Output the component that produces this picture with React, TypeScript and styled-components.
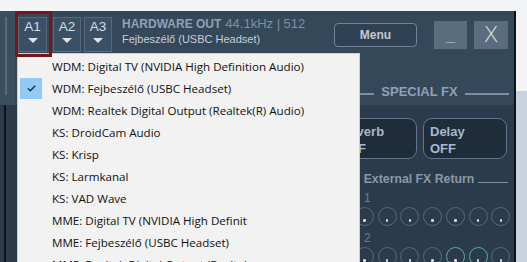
import React from "react";
import styled, { createGlobalStyle } from "styled-components";

const GlobalStyle = createGlobalStyle`
  html, body {
    margin: 0;
    padding: 0;
    background: #f3f4f6;
    overflow: hidden;
  }
  #root {
    width: 527px;
    height: 262px;
  }
`;

const Page = styled.div`
  display: flex;
  flex-direction: column;
  width: 527px;
  height: 262px;
  background: #f3f4f6;
  font-family: "Liberation Sans", Arial, sans-serif;
`;
const TopGap = styled.div`
  height: 11px;
  flex-shrink: 0;
`;
const Workspace = styled.div`
  display: flex;
  flex: 1;
  min-height: 0;
`;
const Panel = styled.div`
  position: relative;
  width: 514px;
  border-right: 2px solid #0c1218;
  display: flex;
  flex-direction: column;
  overflow: hidden;
`;
const SideStrip = styled.div`
  flex: 1;
  display: flex;
  flex-direction: column;
`;
const SideTop = styled.div`
  height: 80px;
  background: #f4f4f4;
`;
const SideBottom = styled.div`
  flex: 1;
  background: #c9d2df;
`;

/* ---------- header ---------- */
const Top = styled.div`
  display: flex;
  height: 94px;
  flex-shrink: 0;
  background: #34485a;
`;
const RailTop = styled.div`
  width: 15px;
  flex-shrink: 0;
  background: #3a4e60;
  &::before {
    content: "";
    display: block;
    width: 2px;
    height: 78px;
    margin: 6px 0 0 5px;
    background: #586b7d;
  }
`;
const TopContent = styled.div`
  flex: 1;
  display: flex;
  flex-direction: column;
`;
const Toolbar = styled.div`
  display: flex;
  align-items: flex-start;
  height: 42px;
  flex-shrink: 0;
  padding-right: 6px;
`;
const FocusFrame = styled.div`
  position: relative;
  z-index: 3;
  width: 31px;
  height: 37px;
  padding-top: 3px;
  margin-right: 1px;
  border: 3px solid #7a1517;
  flex-shrink: 0;
`;
const ChannelGroup = styled.div`
  display: flex;
  gap: 3px;
  margin-top: 6px;
`;
const ChannelButton = styled.div<{ $w?: number }>`
  width: ${(p) => p.$w ?? 28}px;
  height: 35px;
  box-sizing: border-box;
  border: 1px solid #56697b;
  background: #3a5065;
  display: flex;
  flex-direction: column;
  align-items: center;
`;
const ChannelLabel = styled.span`
  margin-top: 2px;
  font-size: 13.5px;
  line-height: 14px;
  color: #d5dce3;
`;
const DownArrow = styled.span`
  margin-top: 4px;
  width: 0;
  height: 0;
  border-left: 5px solid transparent;
  border-right: 5px solid transparent;
  border-top: 5px solid #dde3e9;
`;
const DeviceInfo = styled.div`
  margin: 4px 0 0 10px;
  display: flex;
  flex-direction: column;
  white-space: nowrap;
`;
const DeviceTitle = styled.div`
  line-height: 15px;
`;
const TitleStrong = styled.span`
  font-size: 12px;
  font-weight: bold;
  color: #8ea3b8;
`;
const TitleRate = styled.span`
  font-size: 13px;
  color: #7d91a3;
  margin-left: 4px;
`;
const DeviceName = styled.div`
  margin-top: 1px;
  font-size: 11px;
  line-height: 13px;
  color: #c5ced8;
`;
const Spacer = styled.div`
  flex: 1;
`;
const MenuButton = styled.div`
  width: 83px;
  height: 24px;
  margin-top: 12px;
  box-sizing: border-box;
  border: 1px solid #6e8498;
  border-radius: 4px;
  background: #2f4152;
  display: flex;
  align-items: center;
  justify-content: center;
  font-size: 12px;
  font-weight: bold;
  color: #bfc9d3;
`;
const WindowButton = styled.div<{ $w: number; $ml: number }>`
  width: ${(p) => p.$w}px;
  height: 28px;
  margin: 10px 0 0 ${(p) => p.$ml}px;
  background: #5a6d7e;
  display: flex;
  align-items: center;
  justify-content: center;
  color: #dde4ea;
`;
const MinGlyph = styled.span`
  font-size: 16px;
  font-weight: bold;
  line-height: 16px;
  margin-top: 2px;
  color: #c8d2da;
`;
const CloseGlyph = styled.span`
  font-family: "DejaVu Sans", sans-serif;
  font-size: 22px;
  font-weight: 200;
  line-height: 24px;
  color: #d9e0e7;
`;
const LabelRow = styled.div`
  flex: 1;
  display: flex;
  justify-content: flex-end;
  align-items: flex-end;
  padding: 0 5px 6px 0;
`;

const SectionTitle = styled.div<{ $size: number; $line: number; $color: string }>`
  display: flex;
  align-items: flex-end;
  gap: 4px;
  font-size: ${(p) => p.$size}px;
  line-height: 15px;
  font-weight: bold;
  color: ${(p) => p.$color};
  white-space: nowrap;
  &::before,
  &::after {
    content: "";
    flex: 1;
    height: ${(p) => p.$line}px;
    margin-bottom: 4px;
    background: #7890a4;
  }
`;
const FxTitle = styled(SectionTitle)`
  width: 179px;
  gap: 7px;
`;

/* ---------- body ---------- */
const Body = styled.div`
  flex: 1;
  display: flex;
  background: #2b3b4b;
  min-height: 0;
`;
const RailBottom = styled.div`
  width: 15px;
  flex-shrink: 0;
  &::before {
    content: "";
    display: block;
    width: 2px;
    height: 100%;
    margin-left: 4px;
    background: #0d141b;
  }
`;
const BodyContent = styled.div`
  flex: 1;
  display: flex;
  justify-content: flex-end;
  padding-right: 4px;
`;
const FxColumn = styled.div`
  width: 180px;
  display: flex;
  flex-direction: column;
`;
const FxButtons = styled.div`
  display: grid;
  grid-template-columns: 84px 84px;
  gap: 6px;
  margin: 13px 0 0 3px;
`;
const FxButton = styled.div`
  height: 41px;
  box-sizing: border-box;
  border: 1px solid #5f768b;
  border-radius: 9px;
  background: #1f2d3a;
  padding: 4px 0 0 6px;
  font-size: 13px;
  line-height: 17px;
  font-weight: bold;
  color: #a8b8c8;
`;
const ReturnTitle = styled(SectionTitle)`
  margin-top: 13px;
  padding-right: 2px;
`;
const RowLabel = styled.div<{ $mt: number }>`
  margin-top: ${(p) => p.$mt}px;
  padding-left: 34px;
  font-size: 12px;
  line-height: 14px;
  color: #6c8092;
`;
const KnobRow = styled.div`
  display: flex;
  gap: 3.75px;
  padding-left: 2px;
  margin-top: 2px;
`;
const Knob = styled.div<{ $active?: boolean }>`
  width: 19px;
  height: 19px;
  flex-shrink: 0;
  box-sizing: border-box;
  border-radius: 50%;
  border: 1.5px solid ${(p) => (p.$active ? "#5caf93" : "#55697c")};
  display: flex;
  justify-content: center;
  align-items: flex-end;
  padding-bottom: 3.5px;
`;
const KnobDot = styled.span`
  width: 2.5px;
  height: 2.5px;
  border-radius: 50%;
  background: #d3dbe3;
`;

/* ---------- dropdown ---------- */
const Dropdown = styled.div`
  position: absolute;
  z-index: 2;
  left: 17px;
  top: 42px;
  width: 343px;
  box-sizing: border-box;
  padding: 1px 0;
  background: #f2f2f2;
  border: 1px solid #cfcfcf;
  font-family: "Open Sans", "Noto Sans", sans-serif;
`;
const MenuItem = styled.div`
  display: flex;
  align-items: center;
  height: 22px;
`;
const CheckBox = styled.div<{ $on?: boolean }>`
  width: 22px;
  height: 21px;
  margin-left: 2px;
  background: ${(p) => (p.$on ? "#91c9f7" : "transparent")};
  display: flex;
  align-items: center;
  justify-content: center;
`;
const ItemText = styled.span`
  margin-left: 10px;
  font-size: 11.6px;
  color: #111;
  white-space: nowrap;
`;

const devices = [
  "WDM: Digital TV (NVIDIA High Definition Audio)",
  "WDM: Fejbeszélő (USBC Headset)",
  "WDM: Realtek Digital Output (Realtek(R) Audio)",
  "KS: DroidCam Audio",
  "KS: Krisp",
  "KS: Larmkanal",
  "KS: VAD Wave",
  "MME: Digital TV (NVIDIA High Definit",
  "MME: Fejbeszélő (USBC Headset)",
  "MME: Realtek Digital Output (Realtek",
];

const KnobLine = ({ active = [] as number[] }) => (
  <KnobRow>
    {Array.from({ length: 8 }).map((_, i) => (
      <Knob key={i} $active={active.includes(i)}>
        <KnobDot />
      </Knob>
    ))}
  </KnobRow>
);

const App: React.FC = () => {
  return (
    <Page>
      <GlobalStyle />
      <TopGap />
      <Workspace>
        <Panel>
          <Top>
            <RailTop />
            <TopContent>
              <Toolbar>
                <FocusFrame>
                  <ChannelButton $w={29}>
                    <ChannelLabel>A1</ChannelLabel>
                    <DownArrow />
                  </ChannelButton>
                </FocusFrame>
                <ChannelGroup>
                  <ChannelButton>
                    <ChannelLabel>A2</ChannelLabel>
                    <DownArrow />
                  </ChannelButton>
                  <ChannelButton>
                    <ChannelLabel>A3</ChannelLabel>
                    <DownArrow />
                  </ChannelButton>
                </ChannelGroup>
                <DeviceInfo>
                  <DeviceTitle>
                    <TitleStrong>HARDWARE OUT</TitleStrong>
                    <TitleRate>44.1kHz | 512</TitleRate>
                  </DeviceTitle>
                  <DeviceName>Fejbeszélő (USBC Headset)</DeviceName>
                </DeviceInfo>
                <Spacer />
                <MenuButton>Menu</MenuButton>
                <WindowButton $w={33} $ml={17}>
                  <MinGlyph>_</MinGlyph>
                </WindowButton>
                <WindowButton $w={34} $ml={7}>
                  <CloseGlyph>X</CloseGlyph>
                </WindowButton>
              </Toolbar>
              <LabelRow>
                <FxTitle $size={13} $line={2} $color="#8ea2b6">
                  SPECIAL FX
                </FxTitle>
              </LabelRow>
            </TopContent>
          </Top>
          <Body>
            <RailBottom />
            <BodyContent>
              <FxColumn>
                <FxButtons>
                  <FxButton>
                    Reverb
                    <br />
                    OFF
                  </FxButton>
                  <FxButton>
                    Delay
                    <br />
                    OFF
                  </FxButton>
                </FxButtons>
                <ReturnTitle $size={12.3} $line={1.5} $color="#8799ab">
                  External FX Return
                </ReturnTitle>
                <RowLabel $mt={4}>1</RowLabel>
                <KnobLine />
                <RowLabel $mt={5}>2</RowLabel>
                <KnobLine active={[5, 6]} />
              </FxColumn>
            </BodyContent>
          </Body>
          <Dropdown>
            {devices.map((d, i) => (
              <MenuItem key={d}>
                <CheckBox $on={i === 1}>
                  {i === 1 && (
                    <svg width="9" height="7" viewBox="0 0 9 7">
                      <path d="M0.8 3.4 L3.3 5.8 L8.2 0.8" fill="none" stroke="#1d2833" strokeWidth="1.3" />
                    </svg>
                  )}
                </CheckBox>
                <ItemText>{d}</ItemText>
              </MenuItem>
            ))}
          </Dropdown>
        </Panel>
        <SideStrip>
          <SideTop />
          <SideBottom />
        </SideStrip>
      </Workspace>
    </Page>
  );
};

export default App;
